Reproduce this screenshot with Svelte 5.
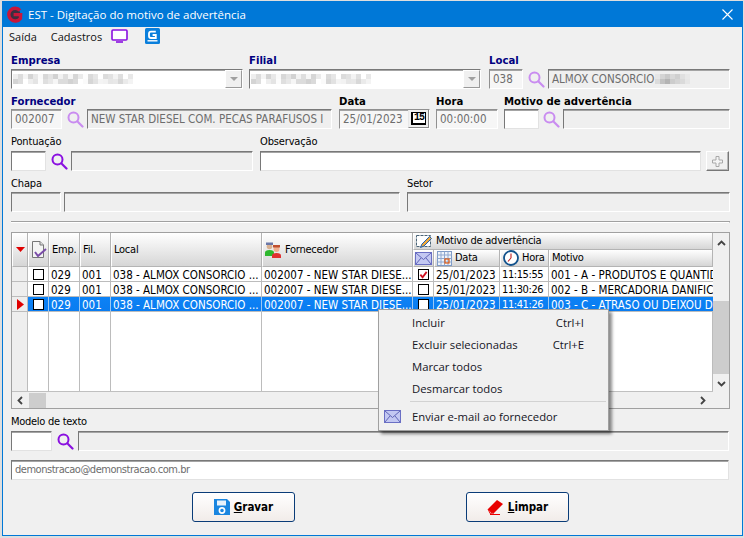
<script>
  const cols = ['ind','chk','emp','fil','loc','forn','mail','dat','hor','mot'];
  const rows = [
    { local:'038 - ALMOX CONSORCIO ...', forn:'002007 - NEW STAR DIESE...', mail:true, hora:'11:15:55', mot:'001 - A - PRODUTOS E QUANTID', sel:false },
    { local:'038 - ALMOX CONSORCIO ...', forn:'002007 - NEW STAR DIESE...', mail:false, hora:'11:30:26', mot:'002 - B - MERCADORIA DANIFIC', sel:false },
    { local:'038 - ALMOX CONSORCIO ...', forn:'002007 - NEW STAR DIESE...', mail:false, hora:'11:41:26', mot:'003 - C - ATRASO OU DEIXOU D', sel:true }
  ];
  const shades = ['#eeeeee','#dcdcdc','#f4f4f4','#d4d4d4','#e8e8e8','#fafafa','#d8d8d8','#e4e4e4','#d2d2d2','#f2f2f2','#dedede','#f6f6f6','#d6d6d6','#eaeaea','#fcfcfc','#dadada','#e6e6e6','#ffffff','#dcdcdc','#e2e2e2','#f3f3f3','#dfdfdf','#ffffff','#e8e8e8'];
  const mosaic = [];
  shades.forEach((c, i) => {
    mosaic.push({ x: i * 5, y: 0, c });
    mosaic.push({ x: i * 5, y: 5, c: shades[(i * 7 + 3) % shades.length] });
  });
  const localMosaic = [
    [0,0,'#e6e6e6'],[5,0,'#d4d4d4'],[10,0,'#c9c9c9'],[15,0,'#d8d8d8'],[20,0,'#cfcfcf'],[25,0,'#e0e0e0'],[30,0,'#e8e8e8'],
    [0,5,'#dcdcdc'],[5,5,'#c2c2c2'],[10,5,'#b4b4b4'],[15,5,'#cccccc'],[20,5,'#d4d4d4'],[25,5,'#dadada'],[30,5,'#e6e6e6']
  ];
</script>

{#snippet search(dim)}
  <svg class="search" class:dim viewBox="0 0 18 18" width="18" height="18"><circle cx="7.5" cy="7.5" r="5" fill="none" stroke="currentColor" stroke-width="2"/><path d="M11.5 11.5 L16.5 16.5" stroke="currentColor" stroke-width="2.2" stroke-linecap="round"/></svg>
{/snippet}
{#snippet envelope()}
  <svg viewBox="0 0 17 13" width="17" height="13"><rect x=".5" y=".5" width="16" height="12" fill="#c3c8f2" stroke="#6a6fc4"/><path d="M1 1 L8.5 7.5 L16 1 M1 12 L6 6 M16 12 L11 6" fill="none" stroke="#5f64b8"/></svg>
{/snippet}
{#snippet blur()}
  <svg class="blur" viewBox="0 0 120 10" width="120" height="10">
    {#each mosaic as m}<rect x={m.x} y={m.y} width="5" height="5" fill={m.c}/>{/each}
  </svg>
{/snippet}

<div class="window">
  <header class="title">
    <svg class="logo" viewBox="0 0 17 17" width="17" height="17"><circle cx="8.5" cy="8.5" r="6" fill="#3a3040"/><path d="M14 4.4 A6.4 6.4 0 1 0 14.4 12.4 L14.6 8.6 L7.6 8.6" fill="none" stroke="#c8173a" stroke-width="3.4"/></svg>
    <span>EST - Digitação do motivo de advertência</span>
    <svg class="close" viewBox="0 0 11 11" width="11" height="11"><path d="M.5 .5 L10.5 10.5 M10.5 .5 L.5 10.5" stroke="#fff" stroke-width="1.1"/></svg>
  </header>

  <nav class="menubar">
    <span class="m1">Saída</span>
    <span class="m2">Cadastros</span>
    <svg class="mon" viewBox="0 0 17 14" width="17" height="14"><rect x="1" y="1" width="15" height="10" rx="1" fill="#fff" stroke="#8a10e0" stroke-width="1.6"/><path d="M5 13 H12" stroke="#8a10e0" stroke-width="1.6"/></svg>
    <svg class="gbook" viewBox="0 0 15 16" width="15" height="16"><rect width="15" height="16" rx="1.5" fill="#0a7fdc"/><path d="M10.8 3.6 H6 Q4 3.6 4 5.6 V8 Q4 10 6 10 H10.8 V7 H7.6" fill="none" stroke="#fff" stroke-width="1.8"/><path d="M2.5 12.8 H12.5" stroke="#fff" stroke-width="1.4"/></svg>
  </nav>

  <main class="form">
    <section class="row r1">
      <div class="group empresa">
        <div class="lbl req">Empresa</div>
        <div class="field combo">{@render blur()}<span class="drop"><i></i></span></div>
      </div>
      <div class="group filial">
        <div class="lbl req">Filial</div>
        <div class="field combo">{@render blur()}<span class="drop"><i></i></span></div>
      </div>
      <div class="group local">
        <div class="lbl req">Local</div>
        <div class="line">
          <div class="field code34 lite"><span>038</span></div>
          <div class="ic">{@render search(true)}</div>
          <div class="field grow ro"><span>ALMOX CONSORCIO</span>
            <svg class="lblur" viewBox="0 0 35 10" width="35" height="10">{#each localMosaic as m}<rect x={m[0]} y={m[1]} width="5" height="5" fill={m[2]}/>{/each}</svg>
          </div>
        </div>
      </div>
    </section>

    <section class="row r2">
      <div class="group forn">
        <div class="lbl req">Fornecedor</div>
        <div class="line">
          <div class="field code51 lite"><span>002007</span></div>
          <div class="ic i25">{@render search(true)}</div>
          <div class="field grow ro"><span>NEW STAR DIESEL COM. PECAS PARAFUSOS I</span></div>
        </div>
      </div>
      <div class="group data">
        <div class="lbl blk">Data</div>
        <div class="field lite datef"><span>25/01/2023</span><span class="cal"><b>15</b></span></div>
      </div>
      <div class="group hora">
        <div class="lbl blk">Hora</div>
        <div class="field lite"><span>00:00:00</span></div>
      </div>
      <div class="group motivo">
        <div class="lbl blk">Motivo de advertência</div>
        <div class="line">
          <div class="field code35 white"></div>
          <div class="ic i24">{@render search(true)}</div>
          <div class="field grow ro"></div>
        </div>
      </div>
    </section>

    <section class="row r3">
      <div class="group pont">
        <div class="lbl low">Pontuação</div>
        <div class="line">
          <div class="field code35 white"></div>
          <div class="ic i25">{@render search(false)}</div>
          <div class="field grow ro"></div>
        </div>
      </div>
      <div class="group obs">
        <div class="lbl low">Observação</div>
        <div class="line">
          <div class="field grow white"></div>
          <button class="plus" aria-label="Adicionar"><svg viewBox="0 0 11 11" width="11" height="11"><path d="M4 .5 H7 V4 H10.5 V7 H7 V10.5 H4 V7 H.5 V4 H4 Z" fill="#f4f4f4" stroke="#a8a8a8"/></svg></button>
        </div>
      </div>
    </section>

    <section class="row r4">
      <div class="group chapa">
        <div class="lbl low">Chapa</div>
        <div class="line g3">
          <div class="field code50 ro"></div>
          <div class="field grow ro"></div>
        </div>
      </div>
      <div class="group setor">
        <div class="lbl low">Setor</div>
        <div class="field ro"></div>
      </div>
    </section>

    <div class="sep"></div>

    <section class="grid">
      <div class="gridtop">
        <div class="gridmain">
          <div class="head">
            <div class="hc ind"><svg viewBox="0 0 9 5" width="9" height="5"><path d="M0 0 H9 L4.5 5 Z" fill="#e00000"/></svg></div>
            <div class="hc chk">
              <svg viewBox="0 0 16 18" width="16" height="18"><path d="M1.5 .5 H9 L12.5 4 V16.5 H1.5 Z" fill="#f4f4f4" stroke="#777"/><path d="M9 .5 V4 H12.5" fill="#ddd" stroke="#777"/><path d="M4 11 L7 15 L15 8" fill="none" stroke="#7a4ca8" stroke-width="2"/></svg>
            </div>
            <div class="hc">Emp.</div>
            <div class="hc">Fil.</div>
            <div class="hc">Local</div>
            <div class="hc fornh">
              <svg viewBox="0 0 18 18" width="18" height="18"><circle cx="5.5" cy="5.5" r="2.8" fill="#d8b090"/><rect x="2" y="1.5" width="7" height="2.5" fill="#6a78a8"/><path d="M1 15 V11.5 Q1 9 5.5 9 Q10 9 10 11.5 V15 Z" fill="#2eb82e"/><circle cx="12.5" cy="8" r="3" fill="#f0b090"/><rect x="9" y="4" width="7" height="2.5" fill="#c05030"/><path d="M8 17 V14.5 Q8 12 12.5 12 Q17 12 17 14.5 V17 Z" fill="#e03030"/></svg>
              <span>Fornecedor</span>
            </div>
            <div class="hc group-h">
              <svg viewBox="0 0 17 16" width="17" height="16"><rect x=".5" y="2.5" width="14" height="11" fill="#fff" stroke="#4a6478" stroke-dasharray="3 1"/><path d="M4.5 14.5 L6 11 L13.5 3.5 L15.5 5.5 L8 13 Z" fill="#f0a838" stroke="#2060b0"/></svg>
              <span>Motivo de advertência</span>
            </div>
            <div class="hc sub mailh">{@render envelope()}</div>
            <div class="hc sub">
              <svg viewBox="0 0 15 15" width="15" height="15"><rect x=".5" y=".5" width="14" height="14" fill="#eef3fa" stroke="#7f9cc8"/><path d="M.5 4 H14.5 M.5 7.5 H14.5 M.5 11 H14.5 M4 .5 V14.5 M7.5 .5 V14.5 M11 .5 V14.5" stroke="#8fa8d0"/><rect x="8" y="8" width="4" height="4" fill="none" stroke="#e05a10" stroke-width="1.2"/></svg>
              <span>Data</span>
            </div>
            <div class="hc sub">
              <svg viewBox="0 0 16 16" width="16" height="16"><circle cx="8" cy="8" r="7" fill="#fff" stroke="#12528c" stroke-width="1.8"/><path d="M8 3.5 V8 M8 8 L5 11.5" stroke="#c02020" stroke-width="1.1" fill="none"/></svg>
              <span>Hora</span>
            </div>
            <div class="hc sub">Motivo</div>
          </div>

          <div class="rows">
            {#each rows as r}
              <div class="tr" class:sel={r.sel}>
                <div class="td ind">{#if r.sel}<svg viewBox="0 0 7 11" width="7" height="11"><path d="M0 0 L7 5.5 L0 11 Z" fill="#e00000"/></svg>{/if}</div>
                <div class="td box"><i class="cb"></i></div>
                <div class="td">029</div>
                <div class="td">001</div>
                <div class="td">{r.local}</div>
                <div class="td">{r.forn}</div>
                <div class="td box"><i class="cb">{#if r.mail}<svg viewBox="0 0 10 10" width="10" height="10"><path d="M1.5 4.5 L4 7.5 L8.5 1.5" fill="none" stroke="#d01020" stroke-width="2"/></svg>{/if}</i></div>
                <div class="td">25/01/2023</div>
                <div class="td hor">{r.hora}</div>
                <div class="td last">{r.mot}</div>
              </div>
            {/each}
            <div class="tr fill">
              {#each cols as c}<div class="td {c === 'ind' ? 'ind' : ''}"></div>{/each}
            </div>
          </div>
        </div>
        <div class="vbar">
          <svg viewBox="0 0 9 6" width="9" height="6"><path d="M1 5 L4.5 1.5 L8 5" fill="none" stroke="#444" stroke-width="1.8"/></svg>
          <div class="vtrack"><div class="vthumb"></div></div>
          <svg viewBox="0 0 9 6" width="9" height="6"><path d="M1 1 L4.5 4.5 L8 1" fill="none" stroke="#444" stroke-width="1.8"/></svg>
        </div>
      </div>
      <div class="hbar">
        <svg viewBox="0 0 6 9" width="6" height="9"><path d="M5 1 L1.5 4.5 L5 8" fill="none" stroke="#444" stroke-width="1.8"/></svg>
        <div class="hthumb"></div>
        <svg class="hr" viewBox="0 0 6 9" width="6" height="9"><path d="M1 1 L4.5 4.5 L1 8" fill="none" stroke="#444" stroke-width="1.8"/></svg>
      </div>
    </section>

    <section class="row r5">
      <div class="group full">
        <div class="lbl low">Modelo de texto</div>
        <div class="line">
          <div class="field code41 white"></div>
          <div class="ic i26">{@render search(false)}</div>
          <div class="field grow ro"></div>
        </div>
      </div>
    </section>

    <section class="row r6">
      <div class="field mail white"><span>demonstracao@demonstracao.com.br</span></div>
    </section>

    <section class="actions">
      <button class="btn">
        <svg viewBox="0 0 16 16" width="16" height="16"><path d="M0 0 H13 L16 3 V16 H0 Z" fill="#1a86e0"/><rect x="3" y="1.5" width="9" height="5" fill="#e8f2fb"/><circle cx="8" cy="11.5" r="2.6" fill="none" stroke="#fff" stroke-width="1.6"/></svg>
        <span><u>G</u>ravar</span>
      </button>
      <button class="btn">
        <svg viewBox="0 0 17 16" width="17" height="16"><path d="M1 10 L10 1 L16 5 L7 14 L3 14 Z" fill="#e80000"/><path d="M1 10 L4 13.5 L7 14 L3 14.5 Z" fill="#ffd0d0" stroke="#e80000" stroke-width=".8"/><path d="M3 15.5 H13" stroke="#e80000"/></svg>
        <span><u>L</u>impar</span>
      </button>
    </section>
  </main>

  <div class="ctx">
    <div class="it"><span>Incluir</span><em>Ctrl+I</em></div>
    <div class="it"><span>Excluir selecionadas</span><em>Ctrl+E</em></div>
    <div class="it"><span>Marcar todos</span></div>
    <div class="it"><span>Desmarcar todos</span></div>
    <div class="ctxsep"></div>
    <div class="it ico"><span class="micon">{@render envelope()}</span><span>Enviar e-mail ao fornecedor</span></div>
  </div>
</div>

<style>
  :global(body) { margin: 0; background: #dedede; }
  * { box-sizing: border-box; }
  .window {
    position: relative;
    width: 741px; height: 535px; margin: 1px 0 0 2px;
    border: 1px solid #0078d7; border-top: 0;
    background: #f0f0f0;
    font: 11.5px/14px "DejaVu Sans Condensed", "DejaVu Sans", sans-serif;
    font-stretch: condensed;
    color: #000; overflow: hidden;
  }
  .title {
    height: 26px; background: #0078d7; color: #fff;
    display: flex; align-items: center; padding: 0 9px 0 3px;
    font: 11.5px "Open Sans", "Noto Sans", sans-serif;
  }
  .title span { margin-left: 5px; flex: 1; }
  .menubar { height: 18px; display: flex; align-items: center; font: 11px "Open Sans", "Noto Sans", sans-serif; color: #111; }
  .m1 { margin-left: 6px; }
  .m2 { margin-left: 14px; }
  .mon { margin-left: 9px; }
  .gbook { margin-left: 17px; }

  .form { padding: 9px 10px 0 8px; }
  .row { display: flex; }
  .r1 { height: 35px; }
  .r2 { margin-top: 5px; height: 35px; }
  .r3 { margin-top: 6px; height: 36px; }
  .r4 { margin-top: 5px; height: 36px; }
  .r5 { margin-top: 6px; }
  .r6 { margin-top: 9px; }
  .group { display: flex; flex-direction: column; }
  .empresa { width: 232px; margin-right: 6px; }
  .filial { width: 232px; margin-right: 8px; }
  .local { width: 241px; }
  .forn { width: 321px; margin-right: 7px; }
  .data { width: 91px; margin-right: 6px; }
  .hora { width: 62px; margin-right: 6px; }
  .motivo { width: 226px; }
  .pont { width: 242px; margin-right: 7px; }
  .obs { width: 469px; }
  .chapa { width: 389px; margin-right: 7px; }
  .setor { width: 323px; }
  .full { width: 718px; }

  .lbl { height: 15px; line-height: 14px; white-space: nowrap; }
  .low { height: 16px; font-size: 11px; letter-spacing: -.15px; }
  .r4 .lbl { line-height: 16px; }
  .r5 .lbl { letter-spacing: -.28px; }
  .r2 .lbl { line-height: 16px; }
  .req, .blk { font-weight: 700; font-size: 11.25px; }
  .req { color: #00007f; }
  .line { display: flex; }
  .g3 { gap: 3px; }
  .grow { flex: 1; min-width: 0; }
  .ic { width: 25px; height: 20px; display: flex; align-items: center; justify-content: center; }
  .i24 { width: 24px; }
  .i26 { width: 26px; }

  .field {
    height: 20px; border: 1px solid; border-color: #787878 #fff #fff #787878;
    box-shadow: inset 0 1px 0 #a4a4a4;
    display: flex; align-items: center; padding: 0 2px 0 3px;
    color: #6d6d6d; white-space: nowrap; overflow: hidden;
  }
  .lite { background: #f6f6f6; border-color: #909090 #fff #fff #909090; }
  .white { background: #fff; border-color: #787878 #e2e2e2 #e2e2e2 #787878; }
  .ro { background: #efefef; }
  .code34 { width: 34px; }
  .code35 { width: 35px; }
  .code41 { width: 41px; }
  .code50 { width: 50px; }
  .code51 { width: 51px; }
  .mail { width: 718px; font-size: 11px; letter-spacing: -.47px; }

  .combo { background: #fff; padding: 0; position: relative; justify-content: space-between; }
  .blur { margin-left: 1px; }
  .lblur { margin-left: 1px; flex: none; }
  .drop {
    width: 17px; height: 18px; background: #f0f0f0;
    border: 1px solid; border-color: #fff #9a9a9a #9a9a9a #fff;
    display: flex; align-items: center; justify-content: center;
  }
  .drop i { width: 0; height: 0; border: 4px solid transparent; border-top: 4px solid #a0a0a0; border-bottom: 0; }
  .datef { justify-content: space-between; padding-right: 0; }
  .cal {
    width: 21px; height: 18px; background: #f0f0f0; display: flex; align-items: center; justify-content: center;
    border-left: 1px solid #e8e8e8; border-right: 1px solid #8a8a8a; border-bottom: 1px solid #8a8a8a;
  }
  .cal b {
    width: 15px; height: 13px; background: #fff; border: 1px solid #000; border-width: 1px 1px 2px 2px; color: #000;
    font: 700 10px/10px "Liberation Mono", monospace; text-align: center; letter-spacing: -1px;
  }
  .plus {
    width: 23px; height: 20px; margin-left: 5px; padding: 0; background: #f0f0f0;
    border: 1px solid; border-color: #fff #777 #777 #fff; display: flex; align-items: center; justify-content: center;
    box-shadow: inset -1px -1px 0 #b8b8b8;
  }
  .search { color: #8a10e0; }
  .search.dim { color: #c98cf0; }

  .sep { margin-top: 9px; height: 2px; width: 719px; border-top: 1px solid #a0a0a0; border-bottom: 1px solid #fff; border-right: 1px solid #a0a0a0; }

  .grid { margin-top: 9px; width: 719px; height: 177px; border: 1px solid #a0a0a0; display: flex; flex-direction: column; background: #f0f0f0; }
  .gridtop { display: flex; height: 159px; }
  .gridmain { width: 701px; display: flex; flex-direction: column; background: #fff; border-bottom: 1px solid #c0c0c0; }
  .head, .tr { display: grid; grid-template-columns: 16px 21px 31px 31px 151px 151px 21px 66px 49px 164px; }
  .head { grid-template-rows: 17px 17px; height: 34px; font-size: 11px; letter-spacing: -.25px; }
  .hc {
    grid-row: 1 / span 2; display: flex; align-items: center; padding-left: 2px; gap: 3px; white-space: nowrap; overflow: hidden;
    background: linear-gradient(#fff, #d6d6d6);
    border-right: 1px solid #b4b4b4; border-bottom: 1px solid #b4b4b4; border-left: 1px solid #fff;
  }
  .hc.ind, .hc.chk { justify-content: center; padding: 0; }
  .fornh { padding-left: 1px; }
  .group-h { grid-row: 1; grid-column: 7 / -1; padding-left: 2px; }
  .sub { grid-row: 2; }
  .mailh { justify-content: center; padding: 0; }
  .rows { flex: 1; display: flex; flex-direction: column; }
  .tr { height: 15px; }
  .td {
    border-right: 1px solid #bcbcbc; border-bottom: 1px solid #bcbcbc; padding-left: 2px; white-space: nowrap; overflow: hidden; line-height: 16px;
  }
  .td.hor { font-size: 11px; letter-spacing: -.4px; }
  .td.ind { background: #eeeeee; padding: 0 0 0 5px; display: flex; align-items: center; }
  .td.box { padding: 0; display: flex; justify-content: center; align-items: center; }
  .td.last { border-right: 0; }
  .cb { width: 11px; height: 11px; border: 1px solid #000; background: #fff; display: flex; }
  .tr.sel .td:not(.ind) { background: linear-gradient(#0c82f6, #0a7cf0); color: #fff; border-right-color: #9cc8f4; }
  .fill { flex: 1; }
  .fill .td { border-bottom: 0; }
  .vbar { flex: 1; display: flex; flex-direction: column; align-items: center; padding: 7px 0 5px; }
  .vtrack { flex: 1; width: 100%; padding-top: 55px; padding-bottom: 7px; display: flex; }
  .vthumb { flex: 1; background: #cdcdcd; }
  .hbar { flex: 1; display: flex; align-items: center; padding-left: 5px; }
  .hthumb { margin-left: 6px; width: 17px; height: 15px; background: #cdcdcd; }
  .hr { margin-left: auto; margin-right: 23px; }

  .actions { display: flex; margin: 12px 0 0 181px; gap: 171px; }
  .btn {
    width: 103px; height: 30px; border: 1px solid #0a3c78; border-radius: 3px;
    background: linear-gradient(#fff, #f1ece9);
    display: flex; align-items: center; justify-content: center; gap: 4px; padding: 0;
    font: 700 11.5px "DejaVu Sans", sans-serif; font-stretch: condensed; color: #000;
  }

  .ctx {
    position: absolute; left: 375px; top: 308px; width: 231px; height: 122px;
    background: #f0f0f0; border: 1px solid #a0a0a0; padding-top: 1px;
    box-shadow: 3px 3px 3px rgba(0,0,0,.45);
    font: 11.3px "Open Sans", "Noto Sans", sans-serif; color: #15151f;
  }
  .it { height: 22px; display: flex; align-items: center; padding-left: 33px; position: relative; }
  .it span { flex: 1; }
  .it em { font-style: normal; position: absolute; right: 24px; }
  .ico { padding-left: 5px; }
  .it .micon { flex: none; width: 28px; display: flex; align-items: center; }
  .ctxsep { height: 1px; background: #d2d2d2; margin: 2px 2px 3px 31px; }
</style>
